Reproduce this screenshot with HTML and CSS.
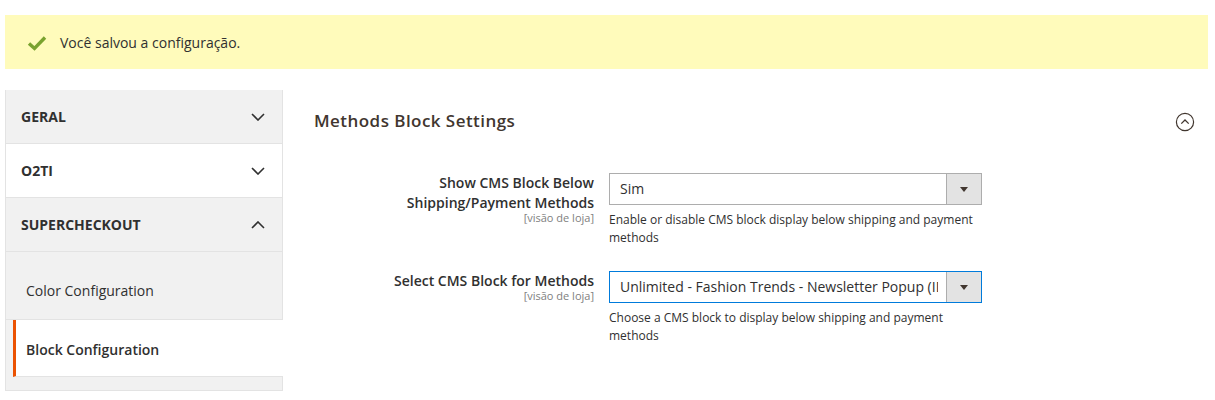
FILE: index.html
```html
<!DOCTYPE html>
<html lang="pt-BR">
<head>
    <meta charset="UTF-8">
    <title>Configuração</title>
    <link rel="stylesheet" href="styles.css">
</head>
<body>

    <!-- Mensagem de sucesso -->
    <div class="message-success">
        <svg class="message-icon" width="20" height="16" viewBox="0 0 20 16">
            <path d="M2 8.5 L7.5 13.5 L18 2.5" fill="none" stroke="#79a22e" stroke-width="3.4"/>
        </svg>
        <span>Você salvou a configuração.</span>
    </div>

    <div class="page-columns">
        <!-- Navegação lateral -->
        <div class="page-nav">
            <div class="nav-title">GERAL
                <svg class="chevron" width="14" height="8" viewBox="0 0 14 8"><path d="M1 1 L7 7 L13 1" fill="none" stroke="#303030" stroke-width="1.6"/></svg>
            </div>
            <div class="nav-title white">O2TI
                <svg class="chevron" width="14" height="8" viewBox="0 0 14 8"><path d="M1 1 L7 7 L13 1" fill="none" stroke="#303030" stroke-width="1.6"/></svg>
            </div>
            <div class="nav-title open">SUPERCHECKOUT
                <svg class="chevron" width="14" height="8" viewBox="0 0 14 8"><path d="M1 7 L7 1 L13 7" fill="none" stroke="#303030" stroke-width="1.6"/></svg>
            </div>
            <ul class="nav-items">
                <li class="nav-item">Color Configuration</li>
                <li class="nav-item active">Block Configuration</li>
            </ul>
            <div class="nav-bottom"></div>
        </div>

        <!-- Conteúdo principal -->
        <div class="main-col">
            <div class="section-head">
                <h2>Methods Block Settings</h2>
                <svg class="collapse-icon" width="20" height="20" viewBox="0 0 20 20">
                    <circle cx="10" cy="10" r="8.6" fill="none" stroke="#41362f" stroke-width="1.2"/>
                    <path d="M6.3 11.6 L10 8 L13.7 11.6" fill="none" stroke="#41362f" stroke-width="1.3"/>
                </svg>
            </div>

            <div class="field-row">
                <div class="field-label">
                    <label>Show CMS Block Below Shipping/Payment Methods</label>
                    <span class="scope">[visão de loja]</span>
                </div>
                <div class="field-control">
                    <div class="select">
                        <span class="select-value">Sim</span>
                        <span class="select-btn"><span class="arrow"></span></span>
                    </div>
                    <p class="note">Enable or disable CMS block display below shipping and payment methods</p>
                </div>
            </div>

            <div class="field-row">
                <div class="field-label">
                    <label>Select CMS Block for Methods</label>
                    <span class="scope">[visão de loja]</span>
                </div>
                <div class="field-control">
                    <div class="select focus">
                        <span class="select-value">Unlimited - Fashion Trends - Newsletter Popup (ID: 12)</span>
                        <span class="select-btn"><span class="arrow"></span></span>
                    </div>
                    <p class="note">Choose a CMS block to display below shipping and payment methods</p>
                </div>
            </div>
        </div>
    </div>

</body>
</html>
```

FILE: styles.css
```css
body {
    margin: 0;
    font-family: 'Open Sans', 'Noto Sans', sans-serif;
    color: #303030;
    background-color: #ffffff;
    font-size: 14px;
}
.message-success {
    margin: 15px 7px 0 5px;
    height: 54px;
    background-color: #fffbbb;
    display: flex;
    align-items: center;
    padding-left: 22px;
    font-size: 14px;
    color: #303030;
    box-sizing: border-box;
}
.message-icon {
    margin-right: 13px;
    margin-top: 1px;
}
.page-columns {
    display: flex;
    margin-top: 21px;
    padding-left: 5px;
}
.page-nav {
    width: 278px;
    flex-shrink: 0;
    border-left: 1px solid #e3e3e3;
    border-right: 1px solid #e3e3e3;
    box-sizing: border-box;
    background-color: #f1f1f1;
}
.nav-title {
    height: 54px;
    display: flex;
    align-items: center;
    justify-content: space-between;
    padding: 0 17px 0 15px;
    font-weight: 700;
    font-size: 14px;
    color: #303030;
    border-bottom: 1px solid #e3e3e3;
    box-sizing: border-box;
    background-color: #f1f1f1;
}
.nav-title.white {
    background-color: #ffffff;
}
.chevron {
    margin-top: 1px;
}
.nav-items {
    list-style: none;
    margin: 0;
    padding: 0;
}
.nav-item {
    height: 68px;
    display: flex;
    align-items: center;
    padding-left: 20px;
    padding-top: 10px;
    box-sizing: border-box;
    font-size: 14px;
    color: #303030;
    border-bottom: 1px solid #e3e3e3;
}
.nav-item.active {
    height: 57px;
    padding-top: 2px;
    background-color: #ffffff;
    font-weight: 600;
    border-left: 3px solid #eb5202;
    margin-left: 7px;
    margin-right: -1px;
    padding-left: 10px;
}
.nav-bottom {
    height: 13px;
    border-bottom: 1px solid #e3e3e3;
}
.main-col {
    flex: 1;
    padding-left: 31px;
    padding-right: 20px;
}
.section-head {
    display: flex;
    align-items: center;
    justify-content: space-between;
    margin-top: 19px;
}
.section-head h2 {
    margin: 0;
    font-size: 17px;
    font-weight: 600;
    color: #41362f;
    letter-spacing: 0.45px;
}
.collapse-icon {
    margin-top: 3px;
}
.field-row {
    display: flex;
    margin-top: 41px;
}
.field-row + .field-row {
    margin-top: 24px;
}
.field-label {
    width: 280px;
    text-align: right;
    padding-right: 15px;
    display: flex;
    flex-direction: column;
    align-items: flex-end;
    padding-top: 0;
}
.field-label label {
    font-weight: 600;
    font-size: 14px;
    line-height: 20px;
    color: #303030;
    width: 220px;
}
.scope {
    font-size: 11px;
    color: #808080;
    line-height: 10px;
}
.field-control {
    width: 373px;
}
.select {
    height: 32px;
    border: 1px solid #adadad;
    display: flex;
    box-sizing: border-box;
    background-color: #ffffff;
}
.select.focus {
    border-color: #007bdb;
}
.select-value {
    flex: 1;
    padding: 0 9px 0 10px;
    margin-right: 8px;
    line-height: 30px;
    font-size: 14px;
    white-space: nowrap;
    overflow: hidden;
}
.select-btn {
    width: 34px;
    border-left: 1px solid #adadad;
    background-color: #e3e3e3;
    display: flex;
    align-items: center;
    justify-content: center;
}
.arrow {
    width: 0;
    height: 0;
    border-left: 4.5px solid transparent;
    border-right: 4.5px solid transparent;
    border-top: 5px solid #41362f;
    margin-top: 1px;
}
.note {
    margin: 6px 0 0 0;
    font-size: 12px;
    line-height: 18px;
    color: #303030;
}
```
